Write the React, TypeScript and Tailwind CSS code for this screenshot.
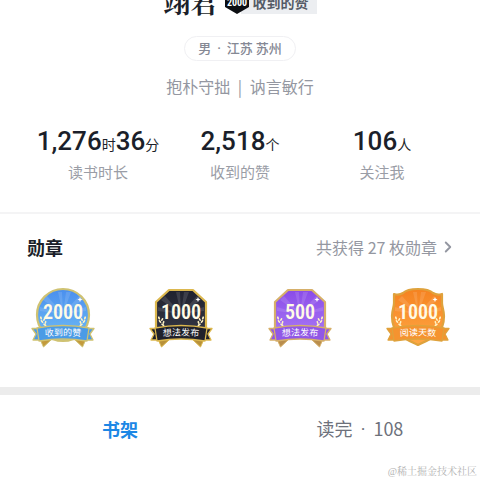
import { useState } from "react";
import { ChevronRight } from "lucide-react";

type BadgeShape = "circle" | "octagon" | "shield";

type Badge = {
  id: string;
  count: string;
  label: string;
  shape: BadgeShape;
  from: string;
  to: string;
  ribbon: string;
  gold: string;
  goldDark: string;
};

const badges: Badge[] = [
  { id: "likes", count: "2000", label: "收到的赞", shape: "circle", from: "#4a8fee", to: "#6fbcf5", ribbon: "#4b9be6", gold: "#cfc272", goldDark: "#c39a3c" },
  { id: "ideas", count: "1000", label: "想法发布", shape: "octagon", from: "#20222e", to: "#343746", ribbon: "#20212b", gold: "#dcb84f", goldDark: "#b8913a" },
  { id: "ideas-500", count: "500", label: "想法发布", shape: "octagon", from: "#8a4be8", to: "#a878f5", ribbon: "#9157e6", gold: "#d6b06a", goldDark: "#b98d4d" },
  { id: "days", count: "1000", label: "阅读天数", shape: "shield", from: "#f58220", to: "#ffa845", ribbon: "#f5932f", gold: "#dfa23c", goldDark: "#d58a25" },
];

const stats = [
  { label: "读书时长", parts: [["1,276", "时"], ["36", "分"]] },
  { label: "收到的赞", parts: [["2,518", "个"]] },
  { label: "关注我", parts: [["106", "人"]] },
];

const outlines: Record<BadgeShape, string> = {
  circle: "M33 3a26 26 0 1 1 0 52a26 26 0 1 1 0-52z",
  octagon: "M21 4H45L58 16V50H8V16z",
  shield: "M33 3C41 3 46 5 48 7C51 9 54 9 57 8V17C57 21 59 24 59 30C59 48 48 52 33 59C18 52 7 48 7 30C7 24 9 21 9 17V8C12 9 15 9 18 7C20 5 25 3 33 3z",
};

function Laurel() {
  return (
    <g fill="#fff3c4">
      <ellipse cx="11" cy="32" rx="0.900" ry="1.700" transform="rotate(-20 11 32)" />
      <ellipse cx="14.200" cy="33.500" rx="0.800" ry="1.700" transform="rotate(30 14.200 33.500)" />
      <ellipse cx="12" cy="35.500" rx="0.900" ry="1.800" transform="rotate(-38 12 35.500)" />
      <ellipse cx="15.500" cy="36.500" rx="0.800" ry="1.700" transform="rotate(20 15.500 36.500)" />
      <ellipse cx="14.800" cy="38.800" rx="0.900" ry="1.900" transform="rotate(-55 14.800 38.800)" />
    </g>
  );
}

function BadgeIcon({ badge }: { badge: Badge }) {
  const fill = `fill-${badge.id}`;
  const curve = `curve-${badge.id}`;
  return (
    <svg viewBox="0 0 66 66" className="size-[66px]" role="img" aria-label={`${badge.count} ${badge.label}`}>
      <defs>
        <linearGradient id={fill} x1="0" y1="0" x2="0" y2="1">
          <stop offset="0" stopColor={badge.from} />
          <stop offset="1" stopColor={badge.to} />
        </linearGradient>
        <path id={curve} d="M8 51Q33 48 58 51" />
      </defs>

      {/* body */}
      <path d={outlines[badge.shape]} fill={`url(#${fill})`} stroke={badge.gold} strokeWidth="2.200" strokeLinejoin="round" />
      <g fill="#fff" opacity="0.120">
        <path d="M33 28L28 6H32zM33 28L36 6H41zM33 28L13 14L17 10zM33 28L49 10L53 14zM33 28L10 25V21zM33 28L56 21V25z" />
      </g>
      <path d="M50 11l.7 1.800l1.800.7l-1.800.7l-.7 1.800l-.7-1.800l-1.800-.7l1.800-.7z" fill="#fff" />
      <Laurel />
      <g transform="matrix(-1 0 0 1 66 0)">
        <Laurel />
      </g>

      {/* ribbon */}
      {badge.shape !== "shield" && (
        <path d="M9 51L13.500 61L22 53zM57 51L52.500 61L44 53z" fill={badge.goldDark} stroke={badge.gold} strokeLinejoin="round" />
      )}
      <path d="M12 42.500L2 42.500L6 48L3 54L13 54zM54 42.500L64 42.500L60 48L63 54L53 54z" fill={badge.ribbon} stroke={badge.gold} strokeWidth="1.300" strokeLinejoin="round" />
      <path d="M7 42Q33 37 59 42L57 55Q33 51 9 55z" fill={badge.ribbon} stroke={badge.gold} strokeWidth="1.300" strokeLinejoin="round" />

      <text x="33" y="33" textAnchor="middle" fill="#fffbe6" className="font-['Roboto_Condensed','Roboto',sans-serif] text-[20px] font-semibold">
        {badge.count}
      </text>
      <text textAnchor="middle" fill="#fff" className="font-['Noto_Sans_CJK_SC',sans-serif] text-[9px] font-normal">
        <textPath href={`#${curve}`} startOffset="50%">{badge.label}</textPath>
      </text>
    </svg>
  );
}

export default function App() {
  const [tab, setTab] = useState("shelf");

  return (
    <main className="relative min-h-screen overflow-hidden bg-white font-['Noto_Sans_CJK_SC',sans-serif] text-[#1b1f2a]">
      {/* Profile */}
      <header className="flex flex-col items-center">
        <div className="flex h-[18px] w-full items-end justify-center overflow-hidden">
          <h1 className="font-['Noto_Serif_CJK_SC','Noto_Sans_CJK_SC',serif] text-[27px] leading-8 font-bold">翊君</h1>
          <div className="ml-[7px] flex items-end pb-1">
            <svg viewBox="0 0 24 28" className="z-10 h-7 w-6">
              <path d="M12 0L24 6V21L12 28L0 21V6z" fill="#0d0f13" />
              <text x="12" y="20" textAnchor="middle" fill="#fff" className="font-['Roboto_Condensed','Roboto',sans-serif] text-[10px] font-bold">2000</text>
            </svg>
            <span className="-ml-2 bg-[#eceef1] pr-2 pl-3 text-[14px] leading-[24px] font-bold text-[#555b66]">收到的赞</span>
          </div>
        </div>
        <p className="mt-[18px] rounded-full border border-[#f0f0f3] px-[13px] text-[13px] leading-[22px] font-medium text-[#858894]">
          男 <span className="mx-[3px] font-['Roboto',sans-serif]">·</span> 江苏 苏州
        </p>
        <p className="mt-[13px] text-[16px] leading-6 text-[#9497a1]">
          抱朴守拙 <span className="mx-1">|</span> 讷言敏行
        </p>
      </header>

      <dl className="mt-[26px] grid grid-cols-3 px-[27px] pb-[30px] text-center">
        {stats.map((stat) => (
          <div key={stat.label} className="flex flex-col-reverse">
            <dt className="text-[15px] leading-5 text-[#9a9da6]">{stat.label}</dt>
            <dd className="font-['Roboto','Noto_Sans_CJK_SC',sans-serif] text-[26px] leading-[34px] font-medium whitespace-nowrap">
              {stat.parts.map(([value, unit]) => (
                <span key={unit}>
                  {value}
                  <span className="text-[14px] font-normal">{unit}</span>
                </span>
              ))}
            </dd>
          </div>
        ))}
      </dl>

      {/* Medals */}
      <section className="border-t-2 border-[#f4f4f5]">
        <div className="flex items-center justify-between pt-[21px] pr-[23px] pl-[27px]">
          <h2 className="text-[18px] leading-6 font-bold">勋章</h2>
          <button type="button" className="flex items-center gap-[2px] text-[16px] leading-6 text-[#9497a1]">
            共获得 27 枚勋章
            <ChevronRight size={18} strokeWidth={2.5} />
          </button>
        </div>
        <div className="flex justify-between pt-[27px] pr-[29px] pb-[35px] pl-[30px]">
          {badges.map((badge) => (
            <BadgeIcon key={badge.id} badge={badge} />
          ))}
        </div>
      </section>

      <div className="h-2 bg-[#ececec]" />

      {/* Tabs */}
      <nav className="grid grid-cols-2 pt-[19px] text-[18px] leading-7">
        <button type="button" onClick={() => setTab("shelf")} className={tab === "shelf" ? "font-bold text-[#1c87e5]" : "text-[#6d717b]"}>
          书架
        </button>
        <button type="button" onClick={() => setTab("done")} className={tab === "done" ? "font-bold text-[#1c87e5]" : "text-[#6d717b]"}>
          读完 <span className="mx-1 font-['Roboto',sans-serif]">·</span> 108
        </button>
      </nav>

      <p className="absolute right-[3px] bottom-0 font-['Liberation_Serif','Noto_Serif_CJK_SC','Noto_Sans_CJK_SC',serif] text-[10px] leading-4 text-[#b3b3b3]">@稀土掘金技术社区</p>
    </main>
  );
}
